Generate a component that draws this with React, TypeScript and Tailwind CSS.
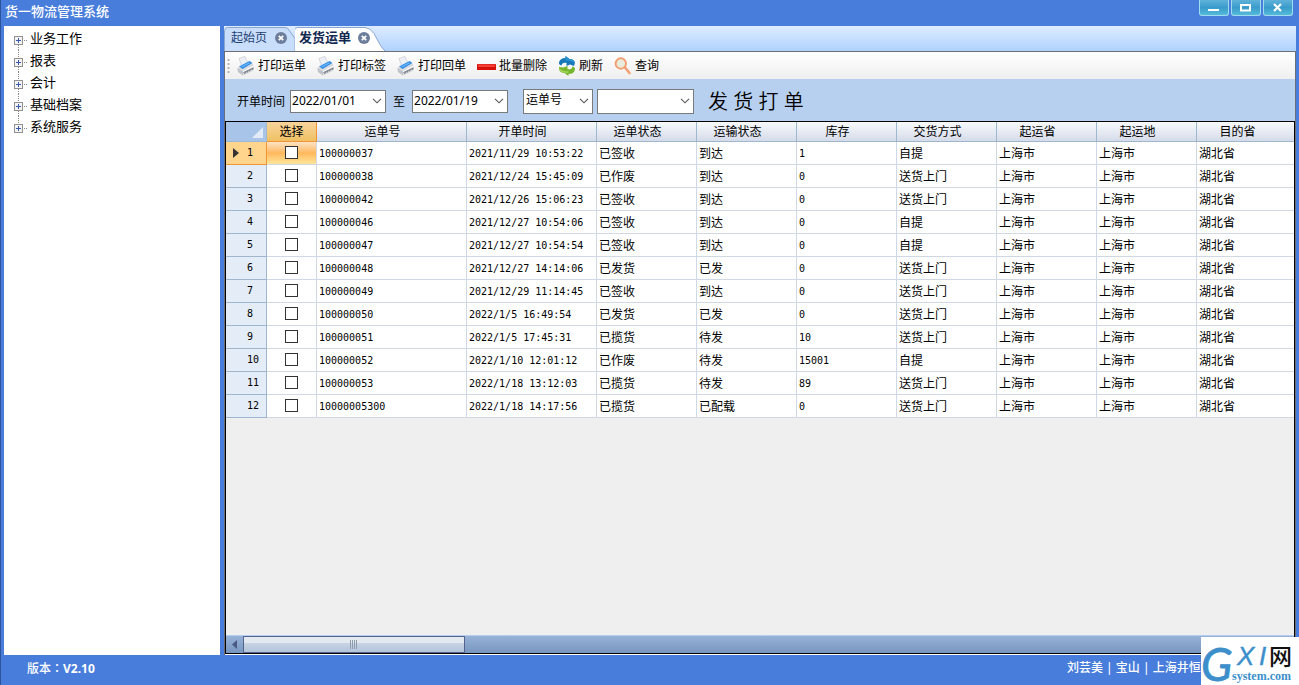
import { useState } from "react";
import type { ReactNode } from "react";

const menu = ["业务工作", "报表", "会计", "基础档案", "系统服务"];

const headers = ["运单号", "开单时间", "运单状态", "运输状态", "库存", "交货方式", "起运省", "起运地", "目的省"];

const orders = [
  ["100000037", "2021/11/29 10:53:22", "已签收", "到达", "1", "自提"],
  ["100000038", "2021/12/24 15:45:09", "已作废", "到达", "0", "送货上门"],
  ["100000042", "2021/12/26 15:06:23", "已签收", "到达", "0", "送货上门"],
  ["100000046", "2021/12/27 10:54:06", "已签收", "到达", "0", "自提"],
  ["100000047", "2021/12/27 10:54:54", "已签收", "到达", "0", "自提"],
  ["100000048", "2021/12/27 14:14:06", "已发货", "已发", "0", "送货上门"],
  ["100000049", "2021/12/29 11:14:45", "已签收", "到达", "0", "送货上门"],
  ["100000050", "2022/1/5 16:49:54", "已发货", "已发", "0", "送货上门"],
  ["100000051", "2022/1/5 17:45:31", "已揽货", "待发", "10", "送货上门"],
  ["100000052", "2022/1/10 12:01:12", "已作废", "待发", "15001", "自提"],
  ["100000053", "2022/1/18 13:12:03", "已揽货", "待发", "89", "送货上门"],
  ["10000005300", "2022/1/18 14:17:56", "已揽货", "已配载", "0", "送货上门"],
].map((row) => [...row, "上海市", "上海市", "湖北省"]);

function PrinterIcon() {
  return (
    <svg width="18" height="20" viewBox="0 0 18 20" aria-hidden="true">
      <path d="M2 2.5 8 .5l3 7-6 3.5z" fill="#eceff3" stroke="#bfc6cf" strokeWidth=".6" />
      <path d="M.5 12 4 9.5 13 5l4 4.5v5L6 19.500 1 16z" fill="#d9dbdf" />
      <path d="M.5 12 6 15.500v4L1 16z" fill="#bfc2c8" />
      <path d="M2 10.500 12.500 5l3 2L5.500 13z" fill="#3590e8" />
      <path d="M4 10.500 12 6.500l1 .8-8 4z" fill="#6db7f5" />
      <path d="m6 15 11-6v1.500l-11 6z" fill="#f6f7f8" />
      <path d="m6.500 16.500 10-4.500M7.500 18l1-2m1.500.8 1-1.800m1.500.4.700-1.700m1.800.3.600-1.500" stroke="#5c5f66" strokeWidth=".8" fill="none" />
    </svg>
  );
}

function MinusIcon() {
  return (
    <svg width="19" height="20" viewBox="0 0 19 20" aria-hidden="true">
      <rect x="0" y="8" width="19" height="6" rx=".5" fill="#d51008" />
      <rect x="1" y="8.500" width="17" height="2.500" fill="#f34034" />
    </svg>
  );
}

function RefreshIcon() {
  return (
    <svg width="18" height="20" viewBox="0 0 18 20" aria-hidden="true">
      <path d="M1 6.500C1.500 3.500 4 2 7.500 2V0l4 3c3 .2 5 1.500 5.500 3.500L16 10l-4-1.500L8.500 10V6.800C5.500 6.300 4 7 3.500 9.500 1.800 9.200.800 8 1 6.500z" fill="#1678b8" />
      <path d="M7.500 2V0l4 3c3 .2 5 1.500 5.500 3.500l-.3 1C14 5 11 4.300 7.500 4.500z" fill="#2b92cf" />
      <path d="M17 13.500c-.5 3-3 4.500-6.500 4.500v2l-4-3c-3-.2-5-1.500-5.500-3.500L1 11l4.500.5L9.500 10v3.200c3 .5 4.500-.2 5-2.700 1.700.3 2.700 1.500 2.500 3z" fill="#74b52b" />
      <path d="M1 13.500v-1.500c3 2.500 6 3.500 9.500 3.300V17c-4 .3-8-.8-9.500-3.500z" fill="#a2d25b" />
    </svg>
  );
}

function SearchIcon() {
  return (
    <svg width="18" height="20" viewBox="0 0 18 20" aria-hidden="true">
      <path d="m11 11.500 4.500 5.500" stroke="#f2a071" strokeWidth="2.600" strokeLinecap="round" />
      <circle cx="6.800" cy="7.500" r="5.200" fill="#e9ecdc" stroke="#f39d70" strokeWidth="1.900" />
    </svg>
  );
}

function ToolButton({ icon, label }: { icon: ReactNode; label: string }) {
  return (
    <button type="button" className="flex items-center gap-[3px]">
      {icon}
      <span className="leading-5">{label}</span>
    </button>
  );
}

function CloseBadge() {
  return (
    <svg width="12" height="12" viewBox="0 0 12 12" aria-hidden="true">
      <circle cx="6" cy="6" r="6" fill="#6d7e9c" />
      <path d="m3.800 3.800 4.400 4.400m0-4.400L3.800 8.200" stroke="#fff" strokeWidth="1.700" />
    </svg>
  );
}

function Combo({ label, value, className }: { label: string; value: string; className: string }) {
  return (
    <span className="relative flex">
      <select aria-label={label} defaultValue={value} className={`appearance-none rounded-none border border-[#7a7a7a] bg-white text-black ${className}`}>
        <option value={value}>{value}</option>
      </select>
      <svg className="pointer-events-none absolute top-1/2 right-1 -translate-y-1/2" width="10" height="6" viewBox="0 0 10 6" aria-hidden="true">
        <path d="m1 .8 4 4 4-4" fill="none" stroke="#555" strokeWidth="1.100" />
      </svg>
    </span>
  );
}

function WindowButton({ label, children }: { label: string; children: ReactNode }) {
  return (
    <button type="button" aria-label={label} className="flex h-4 w-[30px] items-center justify-center rounded-b-[3px] border border-t-0 border-[#9fdcf0] bg-linear-to-b from-[#5fb2da] via-[#3a9bcb] to-[#55bbd8]">
      <svg width="12" height="9" viewBox="0 0 12 9" fill="none" stroke="#fff" aria-hidden="true">{children}</svg>
    </button>
  );
}

export default function App() {
  const [checked, setChecked] = useState<number[]>([]);
  const toggle = (i: number) =>
    setChecked((list) => (list.includes(i) ? list.filter((n) => n !== i) : [...list, i]));

  return (
    <div className="relative flex h-screen flex-col overflow-hidden border-l border-[#2d539b] bg-[#487ddb] font-['Noto_Sans','Noto_Sans_CJK_SC',sans-serif] text-xs text-black">
      <header className="flex h-[26px] shrink-0 items-start justify-between pr-1.5 pl-1">
        <h1 className="text-[13px] leading-[22px] font-medium text-white">货一物流管理系统</h1>
        <div className="flex gap-0.5">
          <WindowButton label="最小化"><path d="M0 7h11" strokeWidth="2" /></WindowButton>
          <WindowButton label="最大化"><path d="M1 2h9v5.500H1z" strokeWidth="2" /></WindowButton>
          <WindowButton label="关闭"><path d="m2 1 7 7m0-7-7 7" strokeWidth="2.200" /></WindowButton>
        </div>
      </header>

      <div className="flex min-h-0 flex-1 gap-1 pr-[3px] pl-[3px]">
        <nav className="w-[216px] shrink-0 bg-white pt-0.5 pl-2.5">
          <ul className="text-[13px]">
            {menu.map((item, i) => (
              <li key={item} className="flex h-[22px] items-start">
                <svg width="14" height="22" viewBox="0 0 14 22" aria-hidden="true" shapeRendering="crispEdges">
                  {i > 0 && <path d="M4.500 0v8" stroke="#888" strokeDasharray="1 1" />}
                  {i < menu.length - 1 && <path d="M4.500 17v5" stroke="#888" strokeDasharray="1 1" />}
                  <path d="M10 12.500h3" stroke="#888" strokeDasharray="1 1" />
                  <rect x=".5" y="8.500" width="8" height="8" fill="#f4f4f4" stroke="#919191" />
                  <path d="M2 12.500h5M4.500 10v5" stroke="#3a58a8" />
                </svg>
                <a href="#" className="pl-0.5 leading-5">{item}</a>
              </li>
            ))}
          </ul>
        </nav>

        <main className="flex min-w-0 flex-1 flex-col">
          <div role="tablist" className="flex h-[25px] shrink-0 bg-linear-to-b from-[#deecff] to-[#b0d2ff]">
            <button type="button" role="tab" aria-selected="false" className="relative flex h-full w-[71px] items-center gap-2 pb-0.5 pl-[7px] text-[#1e3f73]">
              <svg className="absolute inset-0 h-full w-full" viewBox="0 0 71 25" preserveAspectRatio="none" aria-hidden="true">
                <path d="M.5 25V5Q.5 1.500 4 1.500H61q3 0 5 4l5 7V25" fill="#c9defa" stroke="#8ba6cf" />
              </svg>
              <span className="relative">起始页</span>
              <span className="relative"><CloseBadge /></span>
            </button>
            <button type="button" role="tab" aria-selected="true" className="relative flex h-full w-[90px] items-center gap-[7px] pb-0.5 pl-1 font-bold text-[#10284f]">
              <svg className="absolute inset-0 h-full w-full" viewBox="0 0 90 25" preserveAspectRatio="none" aria-hidden="true">
                <path d="M-.5 25V4Q-.5 1.500 3 1.500H70q5 0 9 6l6 11q3 5 5 6.500" fill="#fff" stroke="#8ba6cf" />
              </svg>
              <span className="relative text-[13px]">发货运单</span>
              <span className="relative"><CloseBadge /></span>
            </button>
          </div>

          <div className="flex min-h-0 flex-1 flex-col border border-b-0 border-[#6b6f78]">
            <div role="toolbar" className="flex h-[27px] shrink-0 items-center gap-[11px] bg-linear-to-b from-white to-[#efefef] pl-0.5">
              <svg className="-mr-1" width="3" height="14" viewBox="0 0 3 14" aria-hidden="true">
                <path d="M1.500 0v14" stroke="#b5b5b5" strokeWidth="2" strokeDasharray="2 2" />
              </svg>
              <ToolButton icon={<PrinterIcon />} label="打印运单" />
              <ToolButton icon={<PrinterIcon />} label="打印标签" />
              <ToolButton icon={<PrinterIcon />} label="打印回单" />
              <ToolButton icon={<MinusIcon />} label="批量删除" />
              <ToolButton icon={<RefreshIcon />} label="刷新" />
              <ToolButton icon={<SearchIcon />} label="查询" />
            </div>

            <div className="flex h-[42px] shrink-0 items-center bg-[#b8d0ef] pt-0.5 pl-3">
              <span className="pt-0.5 pr-[5px]">开单时间</span>
              <Combo label="开始日期" value="2022/01/01" className="h-[23px] w-24 pl-px" />
              <span className="px-[7px] pt-0.5">至</span>
              <Combo label="结束日期" value="2022/01/19" className="h-[23px] w-24 pl-px" />
              <span className="pl-[15px]"><Combo label="查询字段" value="运单号" className="h-[25px] w-[70px] pb-0.5 pl-0.5" /></span>
              <span className="pl-1"><Combo label="查询内容" value="" className="h-[25px] w-[97px]" /></span>
              <h2 className="pt-0.5 pl-3.5 text-xl font-[350]">发 货 打 单</h2>
            </div>

            <section className="flex min-h-0 flex-1 flex-col border border-black bg-[#efefef]">
              <div className="min-h-0 flex-1 overflow-hidden">
                <table className="w-[1071px] table-fixed border-separate border-spacing-0">
                  <colgroup>
                    <col className="w-[41px]" />
                    <col className="w-[50px]" />
                    <col className="w-[150px]" />
                    <col className="w-[130px]" />
                    <col span={7} className="w-[100px]" />
                  </colgroup>
                  <thead>
                    <tr className="h-5">
                      <th className="border-r border-b border-[#9db8d4] bg-[#a9c4e9] p-0 align-bottom" aria-label="全选">
                        <svg className="ml-auto" width="16" height="16" viewBox="0 0 16 16" aria-hidden="true"><path d="M13 2v11H2z" fill="#e3ecf6" /></svg>
                      </th>
                      <th className="border-r border-b border-[#f09436] bg-linear-to-b from-[#f8d49a] to-[#efc163] p-0 leading-[19px] font-normal">选择</th>
                      {headers.map((h) => (
                        <th key={h} className="border-r border-b border-[#9eb6ce] bg-linear-to-b from-[#f8fafc] to-[#d5dbe9] p-0 pr-[18px] leading-[19px] font-normal">{h}</th>
                      ))}
                    </tr>
                  </thead>
                  <tbody>
                    {orders.map((row, i) => (
                      <tr key={row[0]} className="h-[23px]">
                        <th className={`border-r border-b p-0 font-normal ${i === 0 ? "border-[#f09436] bg-[#ffd58d]" : "border-[#9eb6ce] bg-[#e4ecf7]"}`}>
                          <div className="flex h-[22px] items-center">
                            <svg className="ml-[7px]" width="6" height="10" viewBox="0 0 6 10" aria-hidden="true">
                              {i === 0 && <path d="M0 0v10l6-5z" fill="#333" />}
                            </svg>
                            <span className={`text-right font-['DejaVu_Sans_Mono',monospace] text-[10px] ${i < 9 ? "w-[14px]" : "w-5"}`}>{i + 1}</span>
                          </div>
                        </th>
                        <td className={`border-r border-b border-[#d0d7e5] p-0 pb-px ${i === 0 ? "bg-linear-to-b from-[#fde3c4] via-[#ffb85c] to-[#ffe69a]" : "bg-white"}`}>
                          <input
                            type="checkbox"
                            aria-label={`选择 ${row[0]}`}
                            checked={checked.includes(i)}
                            onChange={() => toggle(i)}
                            className="mx-auto block size-[13px] appearance-none border border-[#333] bg-white checked:bg-[#3a58a8]"
                          />
                        </td>
                        {row.map((cell, c) => (
                          <td
                            key={c}
                            className={`border-r border-b border-[#d0d7e5] bg-white p-0 pt-px pl-0.5 leading-[21px] whitespace-nowrap ${c < 2 || c === 4 ? "font-['DejaVu_Sans_Mono',monospace] text-[10px]" : ""}`}
                          >
                            {cell}
                          </td>
                        ))}
                      </tr>
                    ))}
                  </tbody>
                </table>
              </div>
              <div className="flex h-[18px] shrink-0 border-t border-[#b4cdf0] bg-linear-to-b from-[#97b2d7] to-[#7796bf]">
                <button type="button" aria-label="向左滚动" className="flex w-[17px] items-center justify-center">
                  <svg width="5" height="9" viewBox="0 0 5 9" aria-hidden="true"><path d="M5 0v9L0 4.500z" fill="#4a5a85" /></svg>
                </button>
                <button type="button" aria-label="水平滚动条" className="flex w-[222px] items-center justify-center border border-[#54648f] bg-linear-to-b from-[#e4e8ef] from-40% via-[#c8d4e4] via-40% to-[#b3c4da]">
                  <svg width="8" height="9" viewBox="0 0 8 9" aria-hidden="true"><path d="M.5 0v9m2-9v9m2-9v9m2-9v9" stroke="#8e9cae" /></svg>
                </button>
              </div>
            </section>
            <div className="h-px shrink-0 bg-white" />
          </div>
        </main>
      </div>

      <footer className="flex h-[30px] shrink-0 items-center justify-between pr-[98px] pb-1 pl-[26px] font-medium text-white">
        <p>版本<span className="font-['Noto_Sans_CJK_TC',sans-serif]">：</span><span className="font-bold">V2.10</span></p>
        <p className="w-[134px] overflow-hidden whitespace-nowrap">刘芸美 | 宝山 | 上海井恒物</p>
      </footer>

      <div className="absolute right-0 bottom-0 h-12 w-[98px] bg-white">
        <svg width="98" height="48" viewBox="0 0 98 48" role="img" aria-label="GXI网 system.com">
          <text x="0" y="44" fontSize="46" fontStyle="italic" fontFamily="Lato, Liberation Sans" fill="#3c8fcb" stroke="#3c8fcb" strokeWidth=".8">G</text>
          <text x="36" y="28" fontSize="26" fontStyle="italic" fontFamily="Liberation Sans" fill="#3c8fcb" stroke="#3c8fcb" strokeWidth=".4">X</text>
          <text x="58" y="28" fontSize="26" fontStyle="italic" fontFamily="Liberation Sans" fill="#3c8fcb" stroke="#3c8fcb" strokeWidth=".4">I</text>
          <text x="68" y="28" fontSize="23" fontWeight="500" fontFamily="Noto Sans CJK SC" fill="#111">网</text>
          <text x="31" y="43" fontSize="12" fontWeight="700" fontFamily="Liberation Serif" fill="#3c8fcb">system.com</text>
        </svg>
      </div>
    </div>
  );
}
